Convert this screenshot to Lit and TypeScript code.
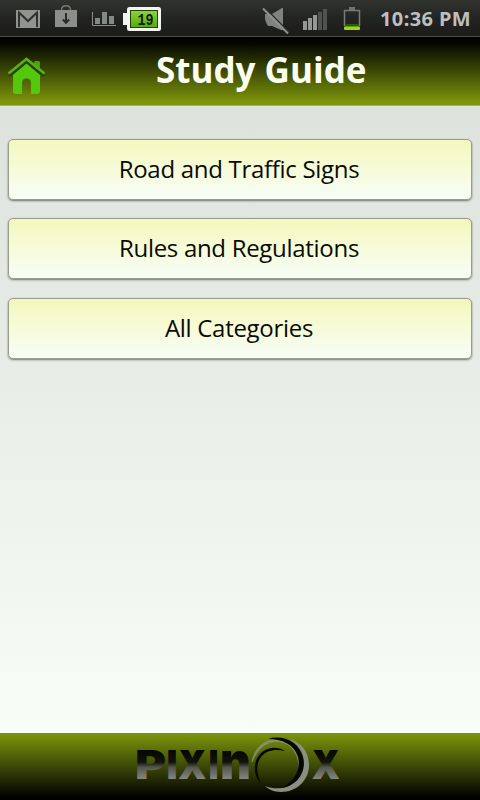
import { LitElement, html, svg, css } from 'lit';
import { customElement, property } from 'lit/decorators.js';

@customElement('status-bar')
class StatusBar extends LitElement {
	static styles = css`
		:host {
			display: flex;
			align-items: center;
			justify-content: space-between;
			box-sizing: border-box;
			height: 37px;
			padding-right: 9px;
			background: linear-gradient(#31332f, #232522 50%, #1b1c1a);
			border-bottom: 1px solid #4c4e4b;
			font-family: 'Noto Sans', 'Open Sans', sans-serif;
		}

		svg {
			display: block;
		}

		.right {
			display: flex;
			align-items: center;
		}

		.level {
			font: bold 17px 'Liberation Mono', monospace;
		}

		.clock {
			width: 91px;
			color: #bebfbd;
			font-size: 20px;
			font-weight: 700;
			letter-spacing: 0.400px;
			line-height: 36px;
			white-space: nowrap;
			padding: 2px 0 0 1px;
		}
	`;

	render() {
		return html`
			<svg width="170" height="36" viewBox="0 0 170 36">
				<defs>
					<linearGradient id="cell" x2="0" y2="1">
						<stop offset="0" stop-color="#8fd13c" />
						<stop offset="1" stop-color="#53ad0c" />
					</linearGradient>
				</defs>
				<rect x="16" y="10" width="24" height="18" fill="#91938f" />
				<path d="M19 27V12.500L28 21L37 12.500V27" fill="none" stroke="#30322f" stroke-width="2" />
				<path d="M61.500 11V9.500Q62 5.800 66 5.800T70.500 9.500V11" fill="none" stroke="#777975" stroke-width="1.400" />
				<rect x="55" y="10" width="22" height="17" fill="#8c8e8a" />
				<path d="M66 13V22M62.800 19.500L66 22.800L69.200 19.500" fill="none" stroke="#292b28" stroke-width="2" />
				<path d="M92.500 12V25.500H116" fill="none" stroke="#8b8d89" stroke-width="1" />
				<path d="M95 18h5v6h-5zM102 12h5v12h-5zM109 16h5v8h-5z" fill="#868884" />
				<path d="M127 13h-4v12h4z" fill="#f3f5f1" />
				<rect x="127" y="7" width="34" height="24" rx="2.500" fill="#f3f5f1" />
				<rect x="130" y="10" width="28" height="18" fill="#24420c" />
				<rect x="131" y="11" width="26" height="16" fill="url(#cell)" />
				<text class="level" x="137.500" y="24.500" textLength="16" lengthAdjust="spacingAndGlyphs" fill="#10200a">19</text>
			</svg>
			<div class="right">
				<svg width="129" height="36" viewBox="250 0 129 36">
					<path d="M265 14h7l10-6h1v22h-2l-9-4h-4q-3-5-3-8z" fill="#80827f" />
					<path d="M264.500 7.500L289.500 32.500" stroke="#2b2d2a" stroke-width="1.500" />
					<path d="M263 8.500L288 33.500" stroke="#90928e" stroke-width="2" />
					<path d="M303 21h4v9h-4zM308 18h4v12h-4zM313 15h4v15h-4z" fill="#969894" />
					<path d="M318 12h4v18h-4zM323 9h4v21h-4z" fill="#50524f" />
					<path d="M344.500 26V10.500H359.500V26" fill="none" stroke="#797b77" stroke-width="1.500" />
					<rect x="349" y="7" width="6" height="3" fill="#70726e" />
					<rect x="345" y="24" width="14" height="3" fill="#315807" />
					<rect x="344" y="26.500" width="16" height="3.500" rx="1" fill="#98d719" />
				</svg>
				<div class="clock">10:36 PM</div>
			</div>
		`;
	}
}

@customElement('title-bar')
class TitleBar extends LitElement {
	static styles = css`
		:host {
			display: flex;
			box-sizing: border-box;
			height: 69px;
			background: linear-gradient(#000 0, #050700 10%, #7d950b 96%);
			border-bottom: 1px solid #a5af72;
			font-family: 'Open Sans', 'Noto Sans', sans-serif;
		}

		.home {
			display: block;
			flex: none;
			margin: 20px 0 0 7px;
		}

		.title {
			flex: 1;
			margin: 0;
			padding-left: 111px;
			color: #fafff0;
			font-size: 35px;
			font-weight: 700;
			line-height: 66px;
			white-space: nowrap;
		}
	`;

	@property() heading = '';

	render() {
		return html`
			<svg class="home" width="38" height="38" viewBox="7 57 38 38">
				<path d="M34 68V62.500Q34 61 35.500 61H38.500Q40 61 40 62.500V72z" fill="#48a50c" />
				<path d="M13 75L26.500 63.500L40 75V91Q40 94 37 94H31V83Q31 78.500 26.500 78.500T22 83V94H16Q13 94 13 91z" fill="#54c80d" />
				<path d="M9 76L26.500 61.700L44 76" fill="none" stroke="#1f4903" stroke-width="2" />
				<path d="M8.500 73.500L26.500 59L44.500 73.500" fill="none" stroke="#5eac1b" stroke-width="2.600" />
			</svg>
			<h1 class="title">${this.heading}</h1>
		`;
	}
}

@customElement('brand-bar')
class BrandBar extends LitElement {
	static styles = css`
		:host {
			display: flex;
			justify-content: center;
			height: 67px;
			background: linear-gradient(#7d960b, #000 96%);
		}

		svg {
			display: block;
			overflow: visible;
		}

		.letter {
			font-family: Inter, sans-serif;
			font-weight: 900;
			fill: url(#metal);
		}
	`;

	// char, left edge, advance width, font size
	letters: [string, number, number, number][] = [
		['P', 135, 31, 40],
		['I', 166.5, 11, 40],
		['X', 178, 28.5, 40],
		['I', 208.5, 10, 40],
		['n', 220, 31, 51],
		['X', 311.5, 28.5, 40],
	];

	render() {
		return html`
			<svg width="240" height="67" viewBox="120 733 240 67">
				<defs>
					<linearGradient id="metal" gradientUnits="userSpaceOnUse" x1="0" y1="750" x2="0" y2="779">
						<stop offset="0" stop-color="#050600" />
						<stop offset="0.420" stop-color="#11130c" />
						<stop offset="0.600" stop-color="#55574f" />
						<stop offset="1" stop-color="#85877f" />
					</linearGradient>
				</defs>
				${this.letters.map(([char, x, width, size]) => svg`
					<text class="letter" x=${x} y="779" font-size=${size} textLength=${width} lengthAdjust="spacingAndGlyphs">${char}</text>
				`)}
				<path d="M252 762C255 745 269 737 282 740C295 744 302 757 299 771C300 757 293 744 281 742C270 740 259 745 252 762z" fill="#85916d" stroke="#85916d" stroke-width="0.800" />
				<path d="M288 739C301 741 309 752 309 765C309 781 296 792 281 792C274 792 268 789 265 786C278 791 291 788 299 777C308 764 304 746 288 739z" fill="#8b8f81" />
				<path d="M268 739C283 734 299 742 303 757C307 773 296 786 282 788C295 781 301 769 298 757C294 744 282 739 268 739z" fill="#050700" />
				<path d="M285 751C274 744 260 749 256 761C253 770 256 779 261 783C256 773 256 764 261 757C267 750 275 749 285 751z" fill="#050700" />
			</svg>
		`;
	}
}

@customElement('app-root')
class AppRoot extends LitElement {
	static styles = css`
		:host {
			display: flex;
			flex-direction: column;
			height: 800px;
			background: #000;
			font-family: 'Open Sans', 'Noto Sans', sans-serif;
		}

		.content {
			flex: 1;
			display: flex;
			flex-direction: column;
			gap: 18.400px;
			padding: 33px 8px 0;
			background: linear-gradient(#dde3dc, #e4e9e4 30%, #f8fdf8);
		}

		.category {
			box-sizing: border-box;
			height: 61px;
			padding: 0 2px 1px 0;
			border: 1px solid #999d8d;
			border-radius: 5px;
			background: linear-gradient(#f3f8bf, #f6fad0 35%, #f6fdf2 90%);
			box-shadow: 0 1px 2px rgba(50, 55, 45, 0.65);
			color: #090b05;
			font-family: inherit;
			font-size: 24px;
			letter-spacing: -0.300px;
			line-height: 58px;
			text-align: center;
		}
	`;

	categories = ['Road and Traffic Signs', 'Rules and Regulations', 'All Categories'];

	render() {
		return html`
			<status-bar></status-bar>
			<title-bar heading="Study Guide"></title-bar>
			<main class="content">
				${this.categories.map(name => html`<button class="category">${name}</button>`)}
			</main>
			<brand-bar></brand-bar>
		`;
	}
}

export { AppRoot, StatusBar, TitleBar, BrandBar };
